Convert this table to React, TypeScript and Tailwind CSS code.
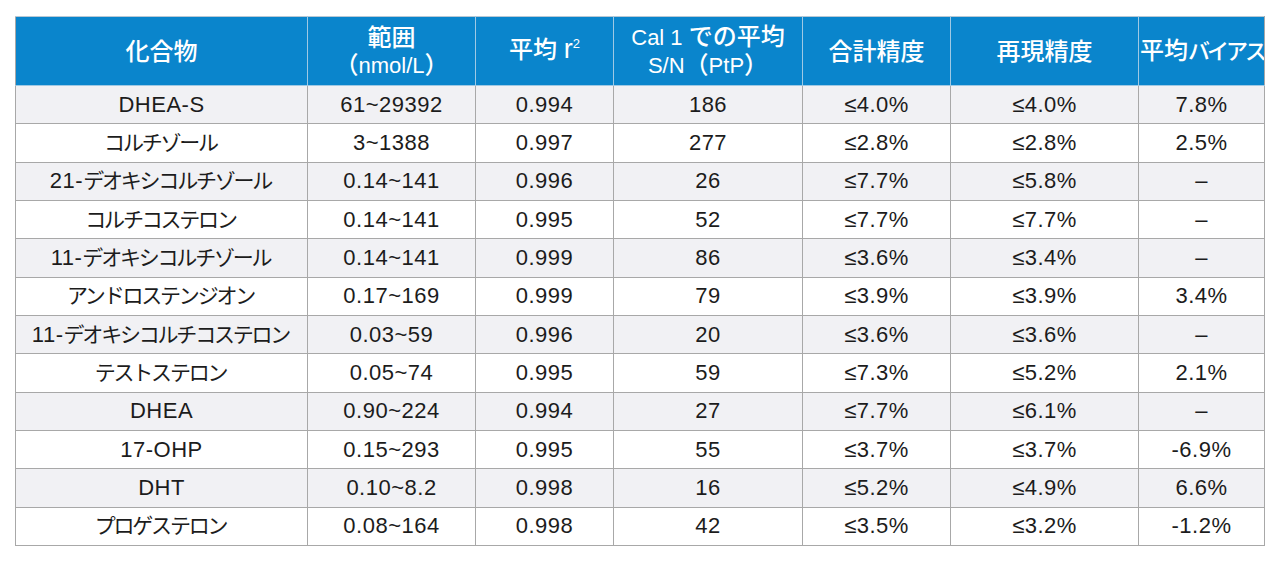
import React from "react";

const rows: string[][] = [
  ["DHEA-S", "61~29392", "0.994", "186", "≤4.0%", "≤4.0%", "7.8%"],
  ["コルチゾール", "3~1388", "0.997", "277", "≤2.8%", "≤2.8%", "2.5%"],
  ["21-デオキシコルチゾール", "0.14~141", "0.996", "26", "≤7.7%", "≤5.8%", "–"],
  ["コルチコステロン", "0.14~141", "0.995", "52", "≤7.7%", "≤7.7%", "–"],
  ["11-デオキシコルチゾール", "0.14~141", "0.999", "86", "≤3.6%", "≤3.4%", "–"],
  ["アンドロステンジオン", "0.17~169", "0.999", "79", "≤3.9%", "≤3.9%", "3.4%"],
  ["11-デオキシコルチコステロン", "0.03~59", "0.996", "20", "≤3.6%", "≤3.6%", "–"],
  ["テストステロン", "0.05~74", "0.995", "59", "≤7.3%", "≤5.2%", "2.1%"],
  ["DHEA", "0.90~224", "0.994", "27", "≤7.7%", "≤6.1%", "–"],
  ["17-OHP", "0.15~293", "0.995", "55", "≤3.7%", "≤3.7%", "-6.9%"],
  ["DHT", "0.10~8.2", "0.998", "16", "≤5.2%", "≤4.9%", "6.6%"],
  ["プロゲステロン", "0.08~164", "0.998", "42", "≤3.5%", "≤3.2%", "-1.2%"],
];

const widths = [292, 168, 138, 189, 148, 188, 126];

function Mixed({ text }: { text: string }) {
  const parts = text.split(/([\u3040-\u30ff\u30fc]+)/).filter((p) => p.length > 0);
  return (
    <>
      {parts.map((p, i) =>
        /[\u3040-\u30ff]/.test(p) ? (
          <span key={i} className="text-[21px] tracking-[-2.2px] mr-[2px]">
            {p}
          </span>
        ) : (
          <span key={i}>{p}</span>
        )
      )}
    </>
  );
}

const font = { fontFamily: '"Liberation Sans", "Noto Sans CJK JP", sans-serif' };

export default function App() {
  return (
    <div className="w-[1280px] h-[565px] bg-white pt-4 pl-[15px]" style={font}>
      <table className="table-fixed border-collapse w-[1249px]">
        <colgroup>
          {widths.map((w, i) => (
            <col key={i} style={{ width: w }} />
          ))}
        </colgroup>
        <thead>
          <tr className="h-[69px] bg-[#0a85cc] text-white font-medium leading-[27px]">
            <th className="border border-[#9fc9e4] border-l-[#a8a8a8] border-t-[#b8c8d4] text-[24px] font-medium">化合物</th>
            <th className="border border-[#9fc9e4] border-t-[#b8c8d4] text-[24px] font-medium">
              <div>範囲</div>
              <div>
                （<span className="text-[22px]">nmol/L</span>）
              </div>
            </th>
            <th className="border border-[#9fc9e4] border-t-[#b8c8d4] text-[24px] font-medium whitespace-nowrap">
              平均 <span className="text-[27px]">r</span>
              <span className="text-[13px] relative -top-[10px]">2</span>
            </th>
            <th className="border border-[#9fc9e4] border-t-[#b8c8d4] text-[24px] font-medium">
              <div>
                <span className="text-[22px]">Cal 1 </span>での平均
              </div>
              <div>
                <span className="text-[22px]">S/N</span>（<span className="text-[22px]">PtP</span>）
              </div>
            </th>
            <th className="border border-[#9fc9e4] border-t-[#b8c8d4] text-[24px] font-medium">合計精度</th>
            <th className="border border-[#9fc9e4] border-t-[#b8c8d4] text-[24px] font-medium">再現精度</th>
            <th className="border border-[#9fc9e4] border-r-[#a8a8a8] border-t-[#b8c8d4] text-[24px] font-medium whitespace-nowrap overflow-hidden text-right pr-0">
              平均<span className="text-[22px] tracking-[-3px]">バイアス</span>
            </th>
          </tr>
        </thead>
        <tbody>
          {rows.map((r, ri) => (
            <tr key={ri} className={`h-[38.33px] ${ri % 2 === 0 ? "bg-[#f1f1f4]" : "bg-white"}`}>
              {r.map((c, ci) => (
                <td
                  key={ci}
                  className="border border-[#a8a8a8] text-center text-[22px] tracking-[0.5px] leading-none text-[#1c1c1c] whitespace-nowrap p-0"
                >
                  <Mixed text={c} />
                </td>
              ))}
            </tr>
          ))}
        </tbody>
      </table>
    </div>
  );
}
